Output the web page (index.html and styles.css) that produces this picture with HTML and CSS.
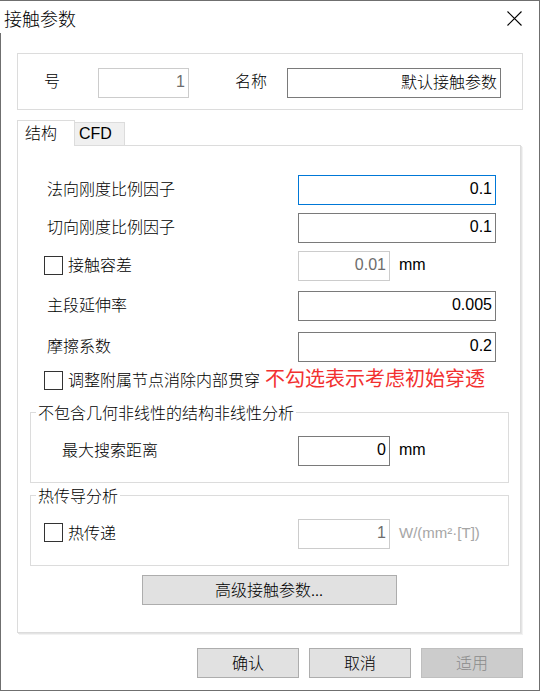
FILE: index.html
```html
<!DOCTYPE html>
<html lang="zh-CN">
<head>
<meta charset="utf-8">
<title>接触参数</title>
<link rel="stylesheet" href="styles.css">
</head>
<body>
<div class="window">
  <div class="titlebar">
    <span class="title">接触参数</span>
    <svg class="close" width="15" height="15" viewBox="0 0 15 15" aria-label="关闭">
      <path d="M0.5 0.5L14.5 14.5M14.5 0.5L0.5 14.5" stroke="#000" stroke-width="1.1" fill="none"/>
    </svg>
  </div>

  <div class="idgroup">
    <span class="idlbl lbl-no">号</span>
    <div class="field field-disabled field-id num">1</div>
    <span class="idlbl lbl-name">名称</span>
    <div class="field field-name cjk">默认接触参数</div>
  </div>

  <div class="tabs">
    <div class="tab tab-active">结构</div>
    <div class="tab tab-cfd">CFD</div>
  </div>

  <div class="panel">
    <div class="row">
      <span class="lbl">法向刚度比例因子</span>
      <div class="field field-focus num">0.1</div>
    </div>
    <div class="row row-gap8">
      <span class="lbl">切向刚度比例因子</span>
      <div class="field num">0.1</div>
    </div>
    <div class="row row-gap8">
      <span class="lbl lbl-cb"><span class="cb cb-r3"></span>接触容差</span>
      <div class="unitcell">
        <div class="field field-disabled field-short num">0.01</div>
        <span class="unit">mm</span>
      </div>
    </div>
    <div class="row row-gap10">
      <span class="lbl">主段延伸率</span>
      <div class="field num">0.005</div>
    </div>
    <div class="row row-gap11">
      <span class="lbl">摩擦系数</span>
      <div class="field num">0.2</div>
    </div>
    <div class="cbrow">
      <span class="cb"></span>
      <span class="cbtext">调整附属节点消除内部贯穿</span>
      <span class="note">不勾选表示考虑初始穿透</span>
    </div>

    <fieldset class="group group-1">
      <legend>不包含几何非线性的结构非线性分析</legend>
      <div class="grow">
        <span class="glbl">最大搜索距离</span>
        <div class="unitcell">
          <div class="field field-short num">0</div>
          <span class="unit">mm</span>
        </div>
      </div>
    </fieldset>

    <fieldset class="group group-2">
      <legend>热传导分析</legend>
      <div class="grow">
        <span class="glbl glbl-cb"><span class="cb cb-g"></span>热传递</span>
        <div class="unitcell">
          <div class="field field-disabled field-short num">1</div>
          <span class="unit unit-disabled">W/(mm²·[T])</span>
        </div>
      </div>
    </fieldset>

    <div class="advbtn">高级接触参数...</div>
  </div>

  <div class="buttons">
    <div class="btn">确认</div>
    <div class="btn">取消</div>
    <div class="btn btn-disabled">适用</div>
  </div>
</div>
</body>
</html>
```

FILE: styles.css
```css
* { box-sizing: border-box; }

body {
  margin: 0;
  font-family: "Noto Sans CJK SC", "Noto Sans", sans-serif;
  font-size: 16px;
  font-weight: 300;
  color: #000;
  background: #fff;
}

.window {
  width: 540px;
  height: 691px;
  border-top: 1px solid #6f6f6f;
  border-right: 1px solid #6f6f6f;
  border-bottom: 1px solid #6f6f6f;
  background: linear-gradient(#6f6f6f, #6f6f6f) no-repeat 0 32px / 1px 100%, #fff;
}

/* title bar */
.titlebar {
  display: flex;
  justify-content: space-between;
  align-items: flex-start;
  height: 52px;
}
.title {
  font-size: 18px;
  line-height: 18px;
  padding: 8px 0 0 4px;
}
.close {
  display: block;
  margin: 10px 17px 0 0;
}

/* id/name group */
.idgroup {
  margin-left: 17px;
  width: 506px;
  height: 57px;
  border: 1px solid #dcdcdc;
  display: flex;
  align-items: flex-start;
  padding-top: 14px;
}
.idlbl { line-height: 24px; }
.lbl-no { margin-left: 26px; }
.field-id { margin-left: 38px; width: 91px; }
.lbl-name { margin-left: 46px; }
.field-name { margin-left: 20px; width: 214px; }

/* fields */
.field {
  height: 30px;
  border: 1px solid #7a7a7a;
  background: #fff;
  text-align: right;
  padding-right: 3px;
  white-space: nowrap;
}
.num {
  font-family: "Liberation Sans", Arial, sans-serif;
  font-size: 16px;
  font-weight: 400;
  line-height: 26px;
}
.cjk {
  font-family: "Noto Sans CJK SC", sans-serif;
  line-height: 24px;
}
.field-focus { border-color: #0078d7; }
.field-disabled {
  border-color: #cccccc;
  color: #6d6d6d;
}
.field-short { width: 92px; }

/* tabs */
.tabs {
  display: flex;
  align-items: flex-end;
  height: 25px;
  margin: 10px 0 0 17px;
}
.tab {
  border: 1px solid #dcdcdc;
  border-bottom: none;
}
.tab-active {
  position: relative;
  z-index: 1;
  width: 58px;
  height: 26px;
  margin-bottom: -1px;
  background: #fff;
  padding: 3px 0 0 7px;
  line-height: 16px;
}
.tab-cfd {
  width: 50px;
  height: 23px;
  border-left: none;
  background: #f0f0f0;
  font-family: "Liberation Sans", Arial, sans-serif;
  font-weight: 400;
  line-height: 22px;
  padding-left: 4px;
}

/* panel */
.panel {
  margin-left: 17px;
  width: 504px;
  border: 1px solid #dcdcdc;
  box-shadow: 1px 1px 0 #e4e4e4, 2px 2px 0 #f2f2f2;
  padding: 29px 0 27px;
}

.row {
  display: grid;
  grid-template-columns: 280px 198px;
  height: 30px;
}
.row-gap8 { margin-top: 8px; }
.row-gap10 { margin-top: 10px; }
.row-gap11 { margin-top: 11px; }

.lbl {
  padding-left: 29px;
  line-height: 27px;
}
.lbl-cb {
  display: flex;
  align-items: flex-start;
  padding-left: 26px;
}

.cb {
  display: inline-block;
  flex: none;
  width: 19px;
  height: 19px;
  border: 1px solid #333;
  background: #fff;
  margin-right: 5px;
}
.cb-r3 { margin-top: 5px; }
.cb-g { margin-top: 4px; }

.unitcell {
  display: flex;
  align-items: flex-start;
}
.unit {
  font-family: "Liberation Sans", Arial, sans-serif;
  font-size: 16px;
  font-weight: 400;
  line-height: 28px;
  margin-left: 9px;
  white-space: nowrap;
}
.unit-disabled {
  color: #a6a6a6;
  font-size: 15px;
}

.cbrow {
  display: flex;
  align-items: flex-start;
  height: 20px;
  margin-top: 9px;
  padding-left: 26px;
}
.cbtext { line-height: 17px; }
.note {
  color: #f23030;
  font-size: 20px;
  font-weight: 400;
  line-height: 20px;
  margin: -3px 0 0 5px;
  white-space: nowrap;
}

/* group boxes */
.group {
  border: 1px solid #dcdcdc;
  margin: 13px 0 0 12px;
  padding: 16px 0 16px;
  width: 479px;
  min-width: 0;
}
.group-2 { margin-top: 4px; }
.group legend {
  margin-left: 5px;
  padding: 0 2px;
  line-height: 16px;
}
.grow {
  display: grid;
  grid-template-columns: 267px 198px;
  height: 30px;
}
.glbl {
  padding-left: 31px;
  line-height: 27px;
}
.glbl-cb {
  display: flex;
  align-items: flex-start;
  padding-left: 13px;
}

/* buttons */
.advbtn {
  width: 255px;
  height: 30px;
  margin: 9px auto 0;
  background: #e1e1e1;
  border: 1px solid #adadad;
  text-align: center;
  line-height: 27px;
}

.buttons {
  display: flex;
  justify-content: flex-end;
  gap: 10px;
  margin-top: 15px;
  padding-right: 16px;
}
.btn {
  width: 102px;
  height: 30px;
  background: #e1e1e1;
  border: 1px solid #adadad;
  text-align: center;
  line-height: 27px;
}
.btn-disabled {
  background: #cccccc;
  border-color: #bfbfbf;
  color: #8a8a8a;
}
```
